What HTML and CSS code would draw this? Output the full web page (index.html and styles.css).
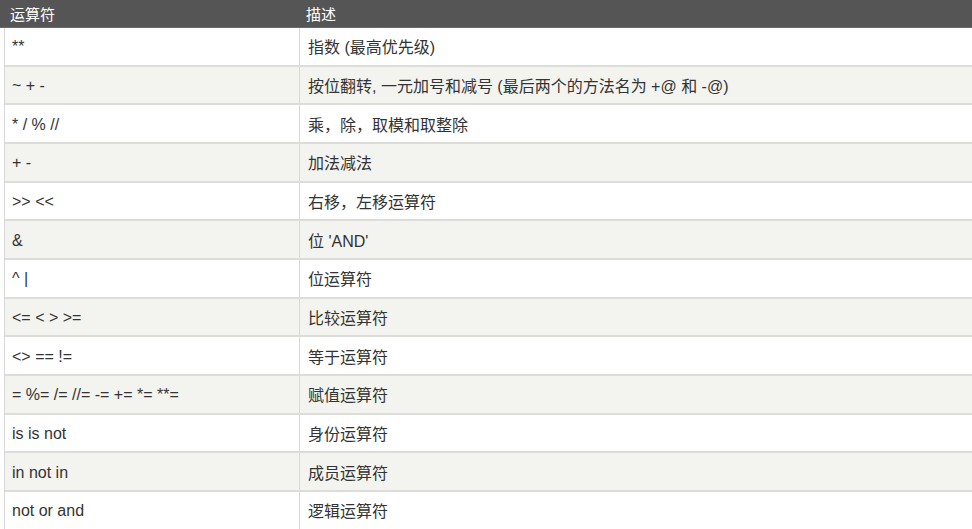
FILE: index.html
```html
<!DOCTYPE html>
<html lang="zh-CN">
<head>
<meta charset="utf-8">
<title>运算符</title>
<link rel="stylesheet" href="styles.css">
</head>
<body>
<div class="ops">
  <div class="head">
    <div class="hc c1">运算符</div>
    <div class="hc c2">描述</div>
  </div>
  <div class="rows">
    <div class="row"><div class="cell c1">**</div><div class="cell c2">指数 (最高优先级)</div></div>
    <div class="row alt"><div class="cell c1">~ + -</div><div class="cell c2">按位翻转, 一元加号和减号 (最后两个的方法名为 +@ 和 -@)</div></div>
    <div class="row"><div class="cell c1">* / % //</div><div class="cell c2">乘，除，取模和取整除</div></div>
    <div class="row alt"><div class="cell c1">+ -</div><div class="cell c2">加法减法</div></div>
    <div class="row"><div class="cell c1">&gt;&gt; &lt;&lt;</div><div class="cell c2">右移，左移运算符</div></div>
    <div class="row alt"><div class="cell c1">&amp;</div><div class="cell c2">位 'AND'</div></div>
    <div class="row"><div class="cell c1">^ |</div><div class="cell c2">位运算符</div></div>
    <div class="row alt"><div class="cell c1">&lt;= &lt; &gt; &gt;=</div><div class="cell c2">比较运算符</div></div>
    <div class="row"><div class="cell c1">&lt;&gt; == !=</div><div class="cell c2">等于运算符</div></div>
    <div class="row alt"><div class="cell c1">= %= /= //= -= += *= **=</div><div class="cell c2">赋值运算符</div></div>
    <div class="row"><div class="cell c1">is is not</div><div class="cell c2">身份运算符</div></div>
    <div class="row alt"><div class="cell c1">in not in</div><div class="cell c2">成员运算符</div></div>
    <div class="row"><div class="cell c1">not or and</div><div class="cell c2">逻辑运算符</div></div>
  </div>
</div>
</body>
</html>
```
FILE: styles.css
```css
html, body {
  margin: 0;
  padding: 0;
  background: #fff;
  overflow: hidden;
}
body {
  font-family: "Liberation Sans", "Noto Sans CJK SC", sans-serif;
  color: #333;
}
.ops {
  width: 972px;
}
.head {
  display: grid;
  grid-template-columns: 300px 1fr;
  height: 28px;
  background: #555;
  border-bottom: 1px solid #6a6a6a;
  box-sizing: border-box;
  color: #fff;
  font-size: 15px;
  align-items: center;
}
.hc.c1 { padding-left: 10px; }
.hc.c2 { padding-left: 6px; }
.rows {
  margin-left: 4px;
  border-left: 1px solid #d8d8d8;
}
.row {
  display: grid;
  grid-template-columns: 295px 1fr;
  height: 38.67px;
  box-sizing: border-box;
  border-bottom: 2px solid #dcdcd8;
  background: #fff;
  font-size: 16px;
  align-items: center;
}
.row.alt {
  background: #f3f3ef;
}
.cell.c1 {
  padding: 2px 0 0 7px;
  box-sizing: border-box;
  border-right: 1px solid #d8d8d8;
  height: 100%;
  display: flex;
  align-items: center;
}
.cell.c2 {
  padding-left: 8px;
}
```
